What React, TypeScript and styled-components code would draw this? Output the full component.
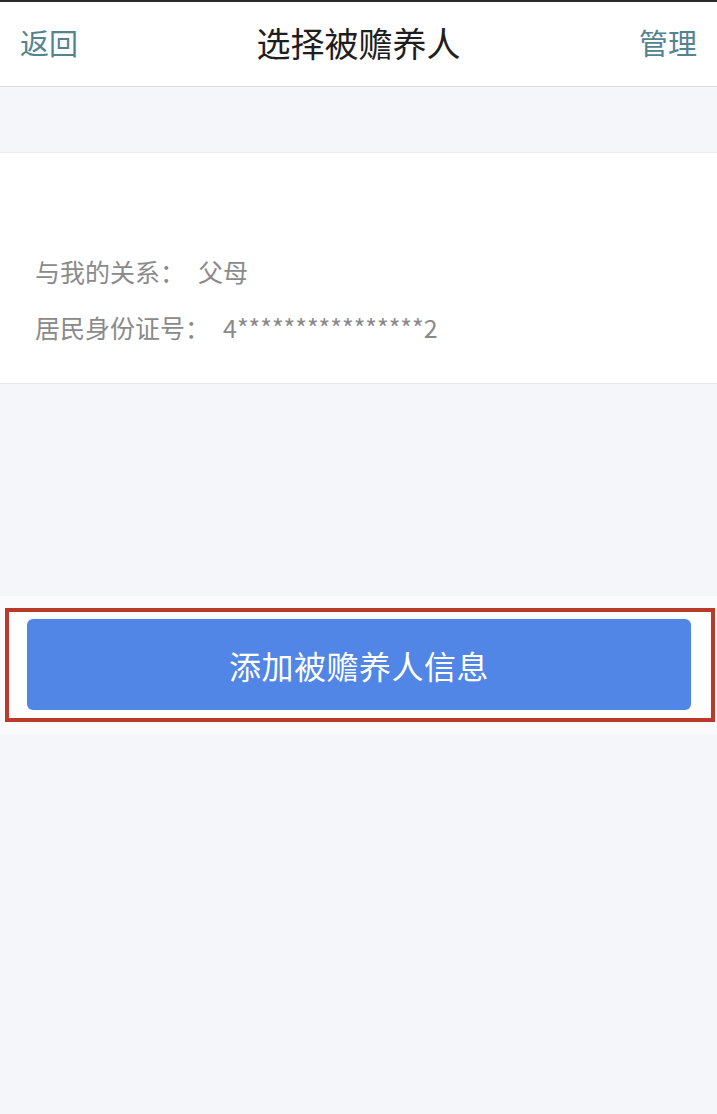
import styled, { createGlobalStyle } from 'styled-components';

const GlobalStyle = createGlobalStyle`
  html, body {
    margin: 0;
    padding: 0;
    background: #f5f6f9;
    font-family: "Noto Sans CJK SC", "Noto Sans", sans-serif;
  }
`;

const Page = styled.div`
  min-height: 1114px;
  background: #f5f6f9;
  border-top: 2px solid #2a2a2a;
  display: flex;
  flex-direction: column;
`;

const NavBar = styled.header`
  height: 85px;
  background: #ffffff;
  border-bottom: 1px solid #dcdde0;
  display: flex;
  align-items: center;
  justify-content: space-between;
  padding: 0 20px 3px;
  box-sizing: border-box;
  position: relative;
`;

const NavLink = styled.span`
  font-size: 29px;
  color: #55838f;
  line-height: 1;
`;

const NavTitle = styled.h1`
  margin: 0;
  font-size: 34px;
  font-weight: 400;
  color: #1e1e1e;
  line-height: 1;
  position: absolute;
  left: 0;
  right: 0;
  text-align: center;
  pointer-events: none;
`;

const Spacer = styled.div<{ $h: number }>`
  height: ${(p) => p.$h}px;
`;

const InfoCard = styled.section`
  background: #ffffff;
  border-top: 1px solid #eceef1;
  border-bottom: 1px solid #e6e8ec;
  height: 232px;
  display: flex;
  flex-direction: column;
  gap: 22px;
  padding: 101px 35px 0;
  box-sizing: border-box;
`;

const InfoRow = styled.div`
  display: flex;
  align-items: center;
  font-size: 25px;
  line-height: 34px;
  color: #8a8a8a;
`;

const Value = styled.span`
  margin-left: 13px;
`;

const Footer = styled.div`
  background: #fbfbfd;
  padding: 12px 2px 12px 5px;
`;

const Highlight = styled.div`
  border: 4px solid #b9392a;
  padding: 7px 20px 8px 18px;
  background: #ffffff;
`;

const AddButton = styled.button`
  display: block;
  width: 100%;
  height: 91px;
  border: none;
  border-radius: 6px;
  background: #5185e6;
  color: #ffffff;
  font-family: inherit;
  font-size: 32px;
  letter-spacing: 0.5px;
  cursor: pointer;
`;

export default function App() {
  return (
    <>
      <GlobalStyle />
      <Page>
        <NavBar>
          <NavLink>返回</NavLink>
          <NavTitle>选择被赡养人</NavTitle>
          <NavLink>管理</NavLink>
        </NavBar>
        <Spacer $h={65} />
        <InfoCard>
          <InfoRow>
            与我的关系：<Value>父母</Value>
          </InfoRow>
          <InfoRow>
            居民身份证号：<Value>4****************2</Value>
          </InfoRow>
        </InfoCard>
        <Spacer $h={212} />
        <Footer>
          <Highlight>
            <AddButton>添加被赡养人信息</AddButton>
          </Highlight>
        </Footer>
      </Page>
    </>
  );
}
